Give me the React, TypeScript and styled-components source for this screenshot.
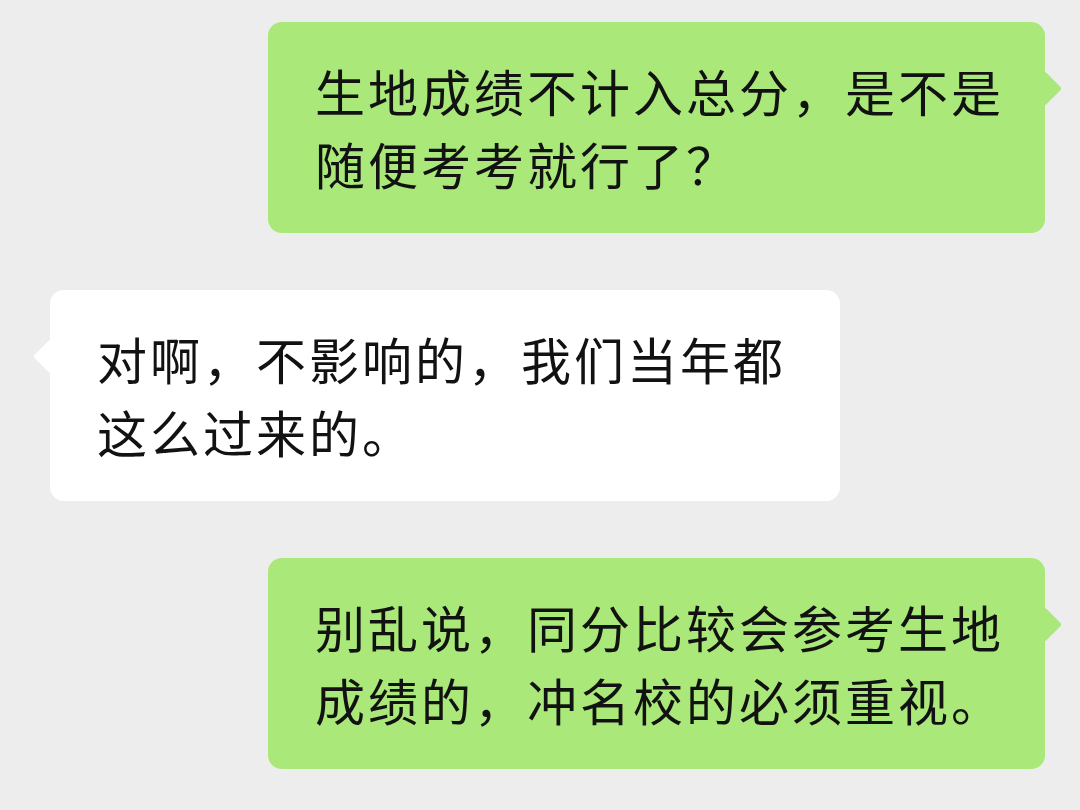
import styled, { createGlobalStyle, css } from "styled-components";

type Side = "left" | "right";

type Message = {
  side: Side;
  lines: string[];
};

const messages: Message[] = [
  { side: "right", lines: ["生地成绩不计入总分，是不是", "随便考考就行了？"] },
  { side: "left", lines: ["对啊，不影响的，我们当年都", "这么过来的。"] },
  { side: "right", lines: ["别乱说，同分比较会参考生地", "成绩的，冲名校的必须重视。"] },
];

export default function App() {
  return (
    <>
      <GlobalStyle />
      <Chat>
        {messages.map((m, i) => (
          <Row key={i} $side={m.side}>
            <Bubble $side={m.side}>
              {m.lines.map((line, j) => (
                <Line key={j}>{line}</Line>
              ))}
            </Bubble>
          </Row>
        ))}
      </Chat>
    </>
  );
}

const GlobalStyle = createGlobalStyle`
  html, body {
    margin: 0;
    padding: 0;
    background: #ededed;
  }
  body {
    font-family: "Noto Sans CJK SC", "Noto Sans", sans-serif;
  }
`;

const Chat = styled.div`
  width: 1080px;
  height: 810px;
  box-sizing: border-box;
  padding: 22px 35px 0 50px;
  display: flex;
  flex-direction: column;
  gap: 57px;
  overflow: hidden;
`;

const Row = styled.div<{ $side: Side }>`
  display: flex;
  justify-content: ${(p) => (p.$side === "right" ? "flex-end" : "flex-start")};
`;

const Bubble = styled.div<{ $side: Side }>`
  position: relative;
  box-sizing: border-box;
  width: ${(p) => (p.$side === "right" ? "777px" : "790px")};
  height: 211px;
  padding: 32px 0 0 47px;
  border-radius: 14px;
  background: ${(p) => (p.$side === "right" ? "#a9e879" : "#ffffff")};
  color: #121212;
  font-size: 50px;
  letter-spacing: 3px;
  line-height: 73px;

  /* little pointer beside the bubble */
  &::after {
    content: "";
    position: absolute;
    top: 54px;
    width: 25px;
    height: 25px;
    border-radius: 3px;
    background: inherit;
    transform: rotate(45deg);
    ${(p) =>
      p.$side === "right"
        ? css`
            right: -12px;
          `
        : css`
            left: -12px;
          `}
  }
`;

const Line = styled.div`
  white-space: nowrap;
`;
